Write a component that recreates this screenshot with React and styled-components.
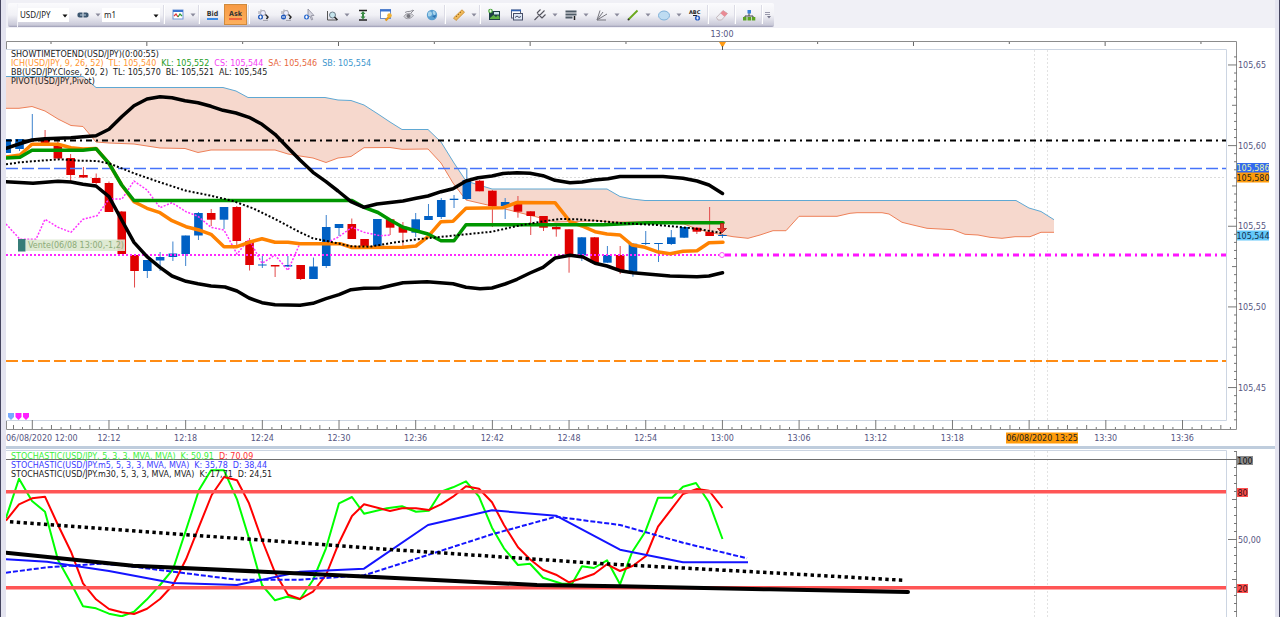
import React from "react";
import styled, { createGlobalStyle } from "styled-components";

const chartFont = `"DejaVu Sans", Verdana, sans-serif`;
const uiFont = `"Noto Sans", "Open Sans", sans-serif`;

const GlobalStyle = createGlobalStyle`
  * {
    box-sizing: border-box;
  }

  body {
    margin: 0;
    background: #e4e4f0;
  }
`;

// Styled components
const Shell = styled.div`
  min-height: 100vh;
  padding: 0 4px 0 5px;
  border-left: 1px solid #45455f;
  border-right: 1px solid #45455f;
  background: #e4e4f0;
`;

const Header = styled.header`
  height: 28px;
  padding: 3px 2px 0;
  background: #f0f0f6;
`;

const Toolbar = styled.div`
  display: inline-flex;
  align-items: stretch;
  height: 24px;
  padding: 1px 2px 0 1px;
  border-radius: 2px;
  background: linear-gradient(#fbfbfd 0%, #f1f1f6 50%, #c9c9d8 92%, #9c9cb4 100%);
  vertical-align: top;
`;

const Grip = styled.span`
  width: 9px;
  border-right: 1px solid #f4f4f9;
`;

const Combo = styled.label`
  position: relative;
  width: ${({ $width }) => $width}px;
  height: 14px;
  margin: 4px 2px 0 0;
  background: #fff;

  select {
    display: block;
    appearance: none;
    width: 100%;
    height: 14px;
    padding: 0 14px 0 2px;
    border: none;
    background: transparent;
    font: 8px/12px ${uiFont};
    color: #222;
    outline: none;
  }

  svg {
    position: absolute;
    right: 1px;
    top: 6px;
    pointer-events: none;
  }
`;

const ToolButton = styled.button`
  display: flex;
  align-items: center;
  justify-content: center;
  width: 23px;
  height: 21px;
  padding: 0;
  border: 1px solid ${({ $active }) => ($active ? "#d08a3c" : "transparent")};
  background: ${({ $active }) =>
    $active ? "linear-gradient(#f79a45, #fdb05e)" : "transparent"};
  cursor: pointer;
`;

const MenuButton = styled(ToolButton)`
  width: 8px;
  border: none;
`;

const Quote = styled.span`
  border-bottom: 2px solid ${({ $color }) => $color};
  font: bold 7px/8px "DejaVu Sans Condensed", ${chartFont};
  color: #333;
`;

const Separator = styled.span`
  width: 2px;
  margin: 1px 1px 3px;
  border-left: 1px solid #dcdce6;
  background: #fff;
`;

const Panel = styled.section`
  position: relative;
  background: #fff;

  > svg {
    display: block;
    width: 100%;
    height: auto;
  }
`;

const PanelDivider = styled.div`
  height: 4px;
  border-bottom: 1px solid #fff;
  background: #bfcddd;
`;

const Legend = styled.div`
  position: absolute;
  left: 5px;
  top: ${({ $top }) => $top}px;
`;

const LegendRow = styled.div`
  display: flex;
  gap: 5px;
  font: 8px/9px ${chartFont};
  white-space: nowrap;
  color: ${({ $color }) => $color};
`;

const LegendValue = styled.span`
  color: ${({ $color }) => $color};
`;

const Svg = (props) => <svg width="14" height="14" viewBox="0 0 14 14" fill="none" {...props} />;

function Caret({ color = "#8a8a9c" }) {
  return (
    <svg width="6" height="4" viewBox="0 0 6 4">
      <path d="M0.5 0.5h5L3 3.5z" fill={color} />
    </svg>
  );
}

const LinkIcon = () => (
  <Svg>
    <path d="M3.5 4.5h3v5h-3a2 2 0 0 1-2-2.5 2 2 0 0 1 2-2.5zM7.5 4.5h3a2 2 0 0 1 2 2.5 2 2 0 0 1-2 2.5h-3z" fill="#3c5670" />
    <path d="M4 7h6" stroke="#a9bccd" strokeWidth="1.2" />
  </Svg>
);

const ChartIcon = () => (
  <Svg>
    <rect x="2" y="2" width="10" height="9" fill="#fff" stroke="#6f95d6" />
    <path d="M2 3h10" stroke="#3b74d2" strokeWidth="2" />
    <path d="M3 8l2-2 2 3" stroke="#d33" strokeWidth="1.2" />
    <path d="M7 9l2-3 2 2" stroke="#2a9a3a" strokeWidth="1.2" />
  </Svg>
);

const ZoomIcon = ({ minus }) => (
  <Svg>
    <path d="M3 6V3M5 5V1.5M8 4V2" stroke="#9a9aa6" />
    <circle cx="7" cy="5" r="2.5" stroke="#a9a9b4" fill="#eef" />
    <path d="M9.5 6.5L12 9l-1.500 2" stroke="#222" strokeWidth="1.4" />
    <path d="M7 12.5h5" stroke="#a6a6b2" />
    <circle cx="4.5" cy="9" r="2.5" fill="#1b55bb" />
    <path d={minus ? "M3 9h3" : "M3 9h3M4.5 7.5v3"} stroke="#fff" />
  </Svg>
);

const CursorIcon = () => (
  <Svg>
    <path d="M6 1v9l2-2 1.5 4 1.2-.5L9.3 7.5H12z" fill="#d6d6e0" stroke="#8c8c9a" strokeWidth=".8" />
    <circle cx="4.5" cy="9" r="2.5" fill="#2a6ad0" />
    <path d="M3 9h3M4.5 7.5v3" stroke="#fff" />
  </Svg>
);

const ChartZoomIcon = () => (
  <Svg>
    <path d="M2.5 3v9H12" stroke="#555" />
    <circle cx="7.5" cy="7" r="3" stroke="#6f7f8c" fill="#c5e4ec" />
    <path d="M9.5 9l3 3" stroke="#222" strokeWidth="1.5" />
  </Svg>
);

const FitIcon = () => (
  <Svg>
    <path d="M3 2.5h8M3 12h8" stroke="#222" strokeWidth="1.4" />
    <path d="M7 3l2.5 3H8v2.5h1.5L7 11.5 4.5 8.5H6V6H4.5z" fill="#3c8c46" />
  </Svg>
);

const PropertiesIcon = () => (
  <Svg>
    <rect x="1.5" y="1.5" width="10" height="9" fill="#fff" stroke="#6c8dc8" />
    <path d="M1 2.5h11" stroke="#3b74d2" strokeWidth="2" />
    <path d="M6.5 12.5l4-4" stroke="#e59a1a" strokeWidth="2.4" />
    <circle cx="10.5" cy="7.5" r="2.3" fill="#f2b234" />
  </Svg>
);

const EyeIcon = () => (
  <Svg>
    <path d="M2 8.5c2-4 7-4 9.500-1C9 11 4 12 2 8.5z" fill="#d5d5da" stroke="#9e9ea6" />
    <circle cx="6.5" cy="8" r="2" fill="#77777f" />
    <path d="M3 4.500c3-2 5 0 8-2.500M9 5l3-3" stroke="#8e8e96" />
  </Svg>
);

const GlobeIcon = () => (
  <Svg>
    <circle cx="7" cy="7" r="5.2" fill="#5a9fd0" />
    <path d="M3 5c2-3 4-1 4 1S4 9 3 8zM8 3c3 0 3 3 2 4s-3-2-2-4z" fill="#a8d4ec" />
    <path d="M7 8l4-1-1 3z" fill="#2c6fae" />
  </Svg>
);

const RulerIcon = () => (
  <Svg>
    <path d="M1.5 10L10 1.8l2.5 2.4L4 12.5z" fill="#f0b95a" stroke="#c48728" strokeWidth=".8" />
    <path d="M4 8l1 1M6 6l1 1M8 4l1 1" stroke="#8a5a14" strokeWidth=".8" />
  </Svg>
);

const ImageIcon = () => (
  <Svg>
    <rect x="2" y="3" width="11" height="9" fill="#1c3f46" />
    <path d="M3 10l3.500-3 2.500 2 2-2 1.500 2v2H3z" fill="#5db144" />
    <rect x="7" y="4" width="5" height="2.5" fill="#cfe6ee" />
    <circle cx="3.5" cy="3" r="2.3" fill="#4aa83a" />
    <path d="M2 3h3M3.5 1.5v3" stroke="#fff" strokeWidth=".8" />
  </Svg>
);

const WindowsIcon = () => (
  <Svg>
    <rect x="1.5" y="2" width="9" height="8" fill="#fff" stroke="#555e78" />
    <path d="M1 2.5h10" stroke="#2f62b5" strokeWidth="1.6" />
    <rect x="3.5" y="5.5" width="9" height="6.5" fill="#dfe8f6" stroke="#48506a" />
    <path d="M5 9.500l2-1.500 2 1.500 2-1" stroke="#48506a" />
  </Svg>
);

const PitchforkIcon = () => (
  <Svg stroke="#55555f" strokeWidth="1.1">
    <path d="M1.5 12l4-4M4 5l5 5M4 5l3.5-3.5M6.500 7.500l5-5M9 10l3.500-3.500" />
  </Svg>
);

const LevelsIcon = () => (
  <Svg>
    <path d="M1.5 3.5h11M1.5 6.5h11M1.5 9.5h7" stroke="#4e5b66" strokeWidth="2" />
    <path d="M10.500 8v4" stroke="#222" strokeWidth="1.5" />
  </Svg>
);

const FanIcon = () => (
  <Svg stroke="#77777f">
    <path d="M2 12L5 2.5M2 12l6-8M2 12l10-6M2 12h9" />
  </Svg>
);

const LineIcon = () => (
  <Svg>
    <path d="M2.5 11.5l9-9" stroke="#6aa81c" strokeWidth="1.8" />
    <circle cx="2.5" cy="11.5" r="1" fill="#333" />
  </Svg>
);

const EllipseIcon = () => (
  <Svg>
    <ellipse cx="7" cy="7.5" rx="5.5" ry="4.5" fill="#bedcf2" stroke="#7fb0d8" />
  </Svg>
);

const LabelIcon = () => (
  <Svg>
    <text x="1" y="6" fontFamily="DejaVu Sans" fontWeight="bold" fontSize="5" fill="#222">ABC</text>
    <path d="M5 7.5h4" stroke="#222" />
    <circle cx="9.5" cy="10" r="2.6" fill="#2a5fc4" />
    <path d="M8 10h3M9.5 8.500v3" stroke="#fff" strokeWidth=".8" />
  </Svg>
);

const EraserIcon = () => (
  <Svg>
    <path d="M1.500 9.500L8 2.5l4.500 3L6.500 12H3z" fill="#ececf1" stroke="#b9a9ae" strokeWidth=".8" />
    <path d="M5.5 5.200L8 2.500l4.500 3-3 3.200z" fill="#e98a94" />
  </Svg>
);

const TreeIcon = () => (
  <Svg>
    <path d="M7 5v3M3 10V8h8v2" stroke="#444" />
    <rect x="5.5" y="2" width="3.5" height="3.5" fill="#3b82d8" />
    <rect x="1" y="9" width="3.5" height="3.5" fill="#5ba322" />
    <rect x="5.5" y="9" width="3.5" height="3.5" fill="#5ba322" />
    <rect x="9.8" y="9" width="3.5" height="3.5" fill="#5ba322" />
  </Svg>
);

// [label, icon, has menu]; null is a separator
const tools = [
  ["Zoom in", <ZoomIcon />],
  ["Zoom out", <ZoomIcon minus />],
  ["Cursor", <CursorIcon />],
  ["Chart zoom", <ChartZoomIcon />, true],
  ["Fit", <FitIcon />],
  ["Properties", <PropertiesIcon />],
  ["Show", <EyeIcon />],
  ["News", <GlobeIcon />],
  null,
  ["Measure", <RulerIcon />, true],
  null,
  ["Save image", <ImageIcon />],
  ["Windows", <WindowsIcon />],
  ["Pitchfork", <PitchforkIcon />, true],
  ["Levels", <LevelsIcon />, true],
  ["Fan", <FanIcon />, true],
  ["Line", <LineIcon />, true],
  ["Ellipse", <EllipseIcon />, true],
  ["Text label", <LabelIcon />],
  null,
  ["Erase", <EraserIcon />],
  null,
  ["Strategies", <TreeIcon />],
  null,
];

const priceLegend = [
  { color: "#222", label: "SHOWTIMETOEND(USD/JPY)(0:00:55)", values: [] },
  {
    color: "#ff9632",
    label: "ICH(USD/JPY, 9, 26, 52)",
    values: [
      ["TL: 105,540", "#ff9632"],
      ["KL: 105,552", "#1f9e1f"],
      ["CS: 105,544", "#f53cf5"],
      ["SA: 105,546", "#e8683c"],
      ["SB: 105,554", "#3c96cd"],
    ],
  },
  {
    color: "#222",
    label: "BB(USD/JPY.Close, 20, 2)",
    values: [
      ["TL: 105,570", "#222"],
      ["BL: 105,521", "#222"],
      ["AL: 105,545", "#222"],
    ],
  },
  { color: "#222", label: "PIVOT(USD/JPY,Pivot)", values: [] },
];

const stochLegend = [
  {
    color: "#3cf03c",
    label: "STOCHASTIC(USD/JPY, 5, 3, 3, MVA, MVA)",
    values: [["K: 50,91", "#3cf03c"], ["D: 70,09", "#ff3232"]],
  },
  {
    color: "#3c3cff",
    label: "STOCHASTIC(USD/JPY.m5, 5, 3, 3, MVA, MVA)",
    values: [["K: 35,78", "#3c3cff"], ["D: 38,44", "#3c3cff"]],
  },
  {
    color: "#222",
    label: "STOCHASTIC(USD/JPY.m30, 5, 3, 3, MVA, MVA)",
    values: [["K: 17,71", "#222"], ["D: 24,51", "#222"]],
  },
];

const cloudTop =
  "6,76.5 83,76.5 96,87.5 223,87.5 236,91 248,97.5 325,97.5 338,100 351,100.5 364,105 378,114 390,122 402,129.5 428,129.5 441,142 454,163 466,181 479,185 492,189 607,189 620,196.5 632,199 645,200.5 1016,200.5 1029,208 1041,211.5 1054,219.7";

const cloudBottom =
  "6,108.3 19,108.3 32,106.5 45,111 58,119 71,125.5 83,126.5 96,142 109,143 134,144 160,148 185,148.5 198,152.5 211,150 275,150 288,154 300,156 313,158 326,162.5 338,158 351,156.5 364,147.7 390,147.5 402,149.3 428,149 441,163 453,183 466,200 479,203 492,206 505,209 517,212 537,217 555,222 570,221.7 597,220.7 610,222 645,222 684,224 697,229 710,232.5 722,234.7 733,236.7 748,238.3 760,235 773,230.7 786,230.7 799,216.3 837,216.3 850,213.3 857,212.7 882,212.7 889,214 902,222.3 913,225 927,228.3 953,229.7 965,234.3 978,235 990,237.3 1002,238.3 1015,236.7 1030,236.7 1041,232.3 1054,232.3";

const bandUpper =
  "6,148.3 19,144 32,140 45,138.7 71,137.7 83,136.7 96,135.7 109,129.3 121.7,116.7 134,105.7 147,99 160,96.7 172,97.7 185,100.7 198,102.7 211,106.3 223,110.3 236,113 249,117.3 262,124.3 275,134.3 287,146.7 300,160 313,172.3 326,181.7 338,191 351,201.7 364,207.3 377,204 403,201 416,198.3 428,196 441,191.7 453,188.7 466,181 478,177.7 492,176 503,173.5 517,172.7 530,173.3 543,175.7 555,180.3 570,182.7 582,182 594,180 608,178.7 620,176.5 663,176.5 683,178.3 697,181 709,185 722.5,193.5";

const bandLower =
  "6,181.7 33,183.3 58,181.3 71,182 83,184.3 96,186 109,196.7 121.7,220 134,242.3 147,256.7 160,267.3 172,276 186,281.3 198,283.7 211,286 225,287 237,291 249,298 262,302.7 275,304.7 300,305.3 313,303.3 326,298.7 339,294.7 351,289.7 364,288.3 380,288 403,282.7 427,281.7 453,283.7 466,287.3 480,288.7 492,288 505,284 517,279.3 530,273 543,267.3 555,258 570,255.3 583,257 595,263.3 607,266 620,270.7 633,272.7 650,274.3 670,276 697,276.7 709,276 722.5,272.7";

const bandMiddle =
  "6,164.3 20,162.3 40,160.7 60,159.3 80,160.7 97,161 110,163.7 134,173.3 160,182.3 186,190.7 211,195.7 233,201 253,208.3 275,219 300,232.3 313,238.3 333,242.3 351,246.3 370,246.7 393,242.7 417,239.3 437,237.3 466,234.3 492,231.7 517,226 543,221.3 561,219 577,219.3 603,221.3 623,223.3 657,225 683,227.3 700,229.3 723,233.3";

const tenkan =
  "6,157 20,155 32,144.3 58,144.3 71,147.7 83,149 96,148.5 109,163.5 121.7,185 134,201.7 147,208.3 160,212.7 172,220.7 186,226.7 200,230.3 211,234.3 224,246.7 237,246.7 249,242.3 262,238.7 275,242.3 288,242.3 300,243.7 340,243.7 352,247.5 403,247.3 416,246 428,236.7 441,221.7 453,221.3 466,208.3 503,207.7 517,202.5 555,202.7 570,221.7 582,226 595,231.7 607,234 620,235 632,245 645,247.3 657,251.7 670,253.7 683,251.3 697,250.7 709,242.7 723,242.3";

const kijun =
  "6,158 20,157.3 32,150.3 83,150.3 96,148.7 109,163.3 121.7,185 134,200.5 352,200.5 364,207.3 378,212.5 390,220 403,227.3 428,234 441,240.7 454,240.7 466,224.7 603,224.7 647,222.7 723,222.7";

const chikou =
  "6,224 20,239.3 36,239.3 45,219.3 58,227.3 71,232.3 83,219.3 97,215.7 109,199 122,199 134,181 147,190 160,207.7 172,202.7 186,211.7 198,216.3 211,227.3 224,230 237,254 249,239.3 262,263.3 275,255 288,270.3 300,243.3 326,243 338,237.3 352,227.3 364,232.3 380,235.7 390,235";

// [minute, wick top, body top, body bottom, wick bottom, rising]
const candles = [
  [-2, 139, 139, 153, 153, 1],
  [-1, 139, 139, 149, 151, 1],
  [0, 114, 139, 141, 141, 1],
  [1, 130, 139, 143, 143, 0],
  [2, 140, 145.5, 158.5, 158.5, 0],
  [3, 154, 158, 175, 181, 0],
  [4, 167, 175, 177.5, 178, 0],
  [5, 173.5, 178, 183, 184, 0],
  [6, 181.5, 183, 212, 212, 0],
  [7, 211, 211.5, 254, 254, 0],
  [8, 255, 255, 271, 287.5, 0],
  [9, 260, 260, 271, 278, 1],
  [10, 252, 257, 260.5, 271, 1],
  [11, 241.5, 253.5, 257, 261, 1],
  [12, 235.5, 235.5, 254, 266, 1],
  [13, 212, 213, 235.5, 240, 1],
  [14, 209, 213, 219.7, 226, 0],
  [15, 207, 207, 219.7, 229, 1],
  [16, 206, 207, 241, 247, 0],
  [17, 238, 241, 265, 270.5, 0],
  [18, 256, 264.5, 265.5, 268, 1],
  [19, 265, 265, 266.5, 277, 0],
  [20, 256, 265, 266.5, 267, 1],
  [21, 265, 265, 279, 280, 0],
  [22, 257.5, 266.5, 279, 279, 1],
  [23, 215, 227, 266, 268, 1],
  [24, 224, 224, 228, 236, 1],
  [25, 218.5, 224, 239, 239, 0],
  [26, 239, 239, 247, 248, 0],
  [27, 219, 219, 246, 246, 1],
  [28, 219, 219.3, 227.7, 235, 0],
  [29, 222, 226.7, 232.7, 246, 0],
  [30, 213, 219.3, 232.7, 237, 1],
  [31, 204, 216, 220, 220, 1],
  [32, 198, 200, 217, 219, 1],
  [33, 195, 198.7, 200, 208, 1],
  [34, 168, 180, 199, 200, 1],
  [35, 180, 180.7, 191.3, 191.3, 0],
  [36, 190, 190.7, 206.3, 227, 0],
  [37, 198, 202, 206, 219, 1],
  [38, 196, 202.7, 211.7, 217.7, 0],
  [39, 211, 211.3, 216, 235, 0],
  [40, 216, 216, 227.7, 231, 0],
  [41, 226, 227, 229.3, 236.7, 0],
  [42, 229, 229.3, 254.3, 272.7, 0],
  [43, 237, 237.3, 255.3, 261, 1],
  [44, 237, 237.3, 262.7, 263, 0],
  [45, 246, 255, 262.7, 263, 1],
  [46, 246, 255, 270.7, 274, 0],
  [47, 243, 243.7, 271.7, 276.7, 1],
  [48, 231, 243, 244, 245, 1],
  [49, 243, 243, 244, 262, 1],
  [50, 230, 237.3, 244, 245, 1],
  [51, 227, 227, 237.7, 238, 1],
  [52, 227, 227.7, 231.7, 234, 0],
  [53, 207, 232, 236, 236, 0],
  [54, 234, 235, 236, 238, 1],
];

const stochK =
  "6,518 19,478.7 32,501 45,511.7 58,560 71,583.3 83,606.3 96,608.3 109,613.7 121.7,616.3 134,611.7 147,599.3 160,585 173,569.3 186,530 199,490 211,470.3 224,470.3 237,499.3 249,538.3 262,585 275,600.3 287,596.7 300,599.3 313,580 326,548.3 339,503.3 352,497 364,513.7 387,508.3 402,506.3 416,511.7 429,510.7 441,491.7 453,487.3 466,481.3 479,496.7 492,527.7 504,548.3 518,565 530,563.7 543,577.7 562,583.7 572,583.7 582,566.3 594,568 607,560.3 620,584.3 632,552.3 645,532.3 658,497.7 672,497.7 683,486.7 696,483 709,502.3 722.5,539";

const stochD =
  "6,520.5 19,504.3 32,498.3 45,496.7 58,525 71,551.7 83,583.3 96,599.3 109,609 121.7,612.3 134,614 147,608.7 160,599 173,585 186,559.3 199,526.7 211.7,495 224,477 237,480.3 249,503.3 262,540 275,572.7 288,594.7 300,599 313,591.7 326,575 339,542.7 352,516 364,504.3 390,511 402,508.3 416,508.3 429,510 441,504.3 453,496.7 466,486.3 479,488.7 492,502.3 504,525 518,547.3 530,559.3 543,569.7 556,574.7 569,582.3 582,578.3 594,574 607,564.3 620,571 633,565.7 646,556 658,526.7 672,508.3 683,494 697,489 709,490.7 722.5,508";

const stoch5K =
  "6,559.3 47,561.7 109,571 173,583 237,585 300,571.7 364,568.7 428,525 492,510.3 556,515.7 620,549.7 683,562.3 748,562.3";

const stoch5D =
  "6,572.7 47,567.3 100,563.7 120,565 173,571.7 237,579.7 300,579.7 364,575.3 428,555 492,534.3 556,516.7 620,525 683,542.7 747,558.3";

const stoch30K = "6,552.7 133,565.7 263,571.7 380,577.3 537,585 620,586.3 770,589.3 908,592";
const stoch30D = "10,521.7 378,548.7 603,563.7 770,572.7 904,580.3";

const timeLabels = [
  "12:12", "12:18", "12:24", "12:30", "12:36", "12:42", "12:48", "12:54",
  "13:00", "13:06", "13:12", "13:18", null, "13:30", "13:36",
];

const FIRST_X = 32.3;
const MINUTE = 12.78;

const AxisText = styled.text`
  font: 8px ${chartFont};
  fill: ${({ $color }) => $color || "#55557f"};
`;

function range(count) {
  return Array.from({ length: count }, (_, i) => i);
}

function Tag({ x, y, width, height = 10, fill, color, children }) {
  return (
    <g>
      <rect x={x} y={y - height / 2} width={width} height={height} fill={fill} />
      <AxisText x={x + width / 2} y={y + 3} textAnchor="middle" $color={color}>
        {children}
      </AxisText>
    </g>
  );
}

function ChartLegend({ top, rows }) {
  return (
    <Legend $top={top}>
      {rows.map((row) => (
        <LegendRow key={row.label} $color={row.color}>
          <span>{row.label}</span>
          {row.values.map(([text, color]) => (
            <LegendValue key={text} $color={color}>
              {text}
            </LegendValue>
          ))}
        </LegendRow>
      ))}
    </Legend>
  );
}

function PriceChart() {
  return (
    <Panel>
      <svg viewBox="6 28 1269 418" role="img" aria-label="USD/JPY price">
        {/* frame */}
        <path d="M6.5 50V41.5H1236.5V429.5H6.5V420" stroke="#8c8c8c" fill="none" />
        <path d="M6 49.5H1226.5V420.5H6" stroke="#ccd5e2" fill="none" />

        {/* time ticks */}
        {range(13).map((i) => (
          <path key={i} d={`M${51 + i * 95.83} 42v${i % 2 ? 4 : 2}`} stroke="#666" />
        ))}
        {range(126).map((i) => {
          const size = i % 8 === 0 ? 9 : i % 2 === 0 ? 4 : 2;
          return <path key={i} d={`M${FIRST_X + i * 9.585} 429v-${size}`} stroke="#777" />;
        })}
        <path d="M13.5 429v-4M22.5 429v-2" stroke="#777" />

        {/* price ticks */}
        {range(46).map((i) => {
          const size = (i - 1) % 10 === 0 ? 9 : (i - 1) % 5 === 0 ? 5 : 3;
          return <path key={i} d={`M1237 ${56.9 + i * 8.065}h-${size}`} stroke="#777" />;
        })}

        <path d="M6 177.5H1226" stroke="#dcdcdc" strokeDasharray="2 2" />
        <path d="M1034.5 50V420M1047.5 50V420" stroke="#e2e2e2" strokeDasharray="2 2" />

        {/* ichimoku cloud */}
        <polygon
          points={`${cloudTop} ${cloudBottom.split(" ").reverse().join(" ")}`}
          fill="#f6d8cd"
        />
        <g fill="none">
          <polyline points={cloudTop} stroke="#5fa8d3" />
          <polyline points={cloudBottom} stroke="#ee8058" />
        </g>

        {candles.map(([minute, high, top, bottom, low, rising]) => {
          const x = FIRST_X + minute * MINUTE;
          const left = Math.max(x - 4.3, 6);
          return (
            <g key={minute}>
              <path d={`M${x} ${high}V${low}`} stroke={rising ? "#3c82cd" : "#e24a4a"} />
              <rect
                x={left}
                y={top}
                width={x + 4.3 - left}
                height={bottom - top}
                fill={rising ? "#0060c4" : "#e00000"}
              />
            </g>
          );
        })}

        {/* pivot levels */}
        <g fill="none">
          <path d="M6 140.5H1226" stroke="#000" strokeWidth="2" strokeDasharray="6 4 2 4" />
          <path d="M6 168.5H1226" stroke="#4673fa" strokeWidth="1.4" strokeDasharray="12 4" />
          <path d="M6 361H1226" stroke="#ff8c14" strokeWidth="2" strokeDasharray="12 4" />
          <path d="M6 255H719" stroke="#ff28ff" strokeWidth="2" strokeDasharray="2 2" />
          <path d="M725 255H1226" stroke="#ff14ff" strokeWidth="3" strokeDasharray="6 4 2 4" />
        </g>

        {/* indicator lines */}
        <g fill="none" strokeLinejoin="round" strokeLinecap="round">
          <polyline points={chikou} stroke="#ff32ff" strokeWidth="1.5" strokeDasharray="2 1.5" strokeLinecap="butt" />
          <polyline points={tenkan} stroke="#ff8200" strokeWidth="3.5" />
          <polyline points={kijun} stroke="#009600" strokeWidth="3.5" />
          <polyline points={bandUpper} stroke="#000" strokeWidth="3.5" />
          <polyline points={bandLower} stroke="#000" strokeWidth="3.5" />
          <polyline points={bandMiddle} stroke="#000" strokeWidth="2" strokeDasharray="2 2" strokeLinecap="butt" />
        </g>

        {/* open trade marker */}
        <circle cx="722" cy="255" r="2.5" fill="#fff" stroke="#ff50ff" />
        <path d="M720.5 223.5h3v5h3l-4.5 4.5-4.5-4.5h3z" fill="#e03c32" stroke="#b41414" strokeWidth=".8" />
        <rect x="18" y="239" width="7.5" height="12.5" fill="#377d78" />
        <rect x="26" y="239.5" width="99" height="11.5" fill="#dbe8ce" fillOpacity=".9" />
        <AxisText x="28" y="248" $color="#8cab78">
          Vente(06/08 13:00,-1,2)
        </AxisText>

        <path d="M8 413h6v4l-3 3-3-3z" fill="#78aaff" />
        <path d="M15.5 413h6v4l-3 3-3-3zM23 413h6v4l-3 3-3-3z" fill="#ff1eff" />

        {/* axis labels */}
        <path d="M719 42h7l-3 5h-1z" fill="#ff9b14" />
        <path d="M722.5 46v4" stroke="#555" />
        <AxisText x="722" y="37" textAnchor="middle">13:00</AxisText>
        <AxisText x="6" y="441">06/08/2020 12:00</AxisText>
        {timeLabels.map((label, i) =>
          label ? (
            <AxisText key={label} x={FIRST_X + (i + 1) * 76.67} y="441" textAnchor="middle">
              {label}
            </AxisText>
          ) : null
        )}
        <Tag x={1006} y={438} width={72} height={11} fill="#ff9b0a" color="#222">
          06/08/2020 13:25
        </Tag>

        {["105,65", "105,60", "105,55", "105,50", "105,45"].map((label, i) => (
          <AxisText key={label} x="1238" y={68 + i * 80.65}>
            {label}
          </AxisText>
        ))}
        <Tag x={1237} y={168} width={32} fill="#3269f0" color="#e6f5aa">105,586</Tag>
        <Tag x={1237} y={177.5} width={32} fill="#ff9b0a" color="#222">105,580</Tag>
        <Tag x={1237} y={235.5} width={32} fill="#64c8fa" color="#143250">105,544</Tag>
      </svg>
      <ChartLegend top={22} rows={priceLegend} />
    </Panel>
  );
}

function StochasticChart() {
  return (
    <Panel>
      <svg viewBox="6 450 1269 167" role="img" aria-label="Stochastic">
        <path d="M6 450.5H1226.5V617" stroke="#ccd5e2" fill="none" />
        <path d="M1236.5 451V617" stroke="#8c8c8c" />
        {range(21).map((i) => {
          const size = i === 11 ? 9 : i === 6 || i === 16 ? 5 : 3;
          return <path key={i} d={`M1237 ${451.5 + i * 8}h-${size}`} stroke="#777" />;
        })}
        <path d="M1034.5 451V617M1047.5 451V617" stroke="#e2e2e2" strokeDasharray="2 2" />

        <path d="M6 459.5H1237" stroke="#6e6e6e" />

        <g fill="none" strokeLinejoin="round">
          <polyline points={stochK} stroke="#0f0" strokeWidth="2" />
          <polyline points={stochD} stroke="#f00" strokeWidth="2" />
          <polyline points={stoch5K} stroke="#1414ff" strokeWidth="2" />
          <polyline points={stoch5D} stroke="#1414ff" strokeWidth="2" strokeDasharray="5 2" />
          <path d="M6 491.8H1226M6 587.8H1226" stroke="#ff5555" strokeWidth="3.4" />
          <polyline points={stoch30K} stroke="#000" strokeWidth="4" strokeLinecap="round" />
          <polyline points={stoch30D} stroke="#000" strokeWidth="3.5" strokeDasharray="3.4 3.4" />
        </g>

        <Tag x={1237} y={460.5} width={16} height={9} fill="#8c8c8c" color="#111">100</Tag>
        <Tag x={1237} y={492.5} width={11} height={9} fill="#ff5050" color="#311">80</Tag>
        <AxisText x="1238" y="543">50,00</AxisText>
        <Tag x={1237} y={588.5} width={11} height={9} fill="#ff5050" color="#311">20</Tag>
      </svg>
      <ChartLegend top={2} rows={stochLegend} />
    </Panel>
  );
}

function App() {
  return (
    <>
      <GlobalStyle />
      <Shell>
        <Header>
          <Toolbar role="toolbar">
            <Grip />
            <Combo $width={51}>
              <select aria-label="Instrument" defaultValue="USD/JPY">
                <option>USD/JPY</option>
              </select>
              <Caret color="#111" />
            </Combo>
            <ToolButton aria-label="Link"><LinkIcon /></ToolButton>
            <MenuButton aria-label="Link menu"><Caret /></MenuButton>
            <Combo $width={58}>
              <select aria-label="Period" defaultValue="m1">
                <option>m1</option>
              </select>
              <Caret color="#111" />
            </Combo>
            <Separator />
            <ToolButton aria-label="Chart type"><ChartIcon /></ToolButton>
            <MenuButton aria-label="Chart type menu"><Caret /></MenuButton>
            <Separator />
            <ToolButton><Quote $color="#3c8ce6">Bid</Quote></ToolButton>
            <ToolButton $active><Quote $color="#f0643c">Ask</Quote></ToolButton>
            <Separator />
            {tools.map((tool, index) => {
              if (!tool) return <Separator key={index} />;
              const [label, icon, menu] = tool;
              return (
                <React.Fragment key={label}>
                  <ToolButton aria-label={label}>{icon}</ToolButton>
                  {menu && (
                    <MenuButton aria-label={`${label} menu`}>
                      <Caret />
                    </MenuButton>
                  )}
                </React.Fragment>
              );
            })}
            <MenuButton aria-label="More">
              <svg width="8" height="8" viewBox="0 0 8 8">
                <path d="M1 1.5h5M1 3.5h5" stroke="#9a9aac" />
                <path d="M3 5h4L5 7.500z" fill="#77778c" />
              </svg>
            </MenuButton>
          </Toolbar>
        </Header>
        <main>
          <PriceChart />
          <PanelDivider />
          <StochasticChart />
        </main>
      </Shell>
    </>
  );
}

export default App;
